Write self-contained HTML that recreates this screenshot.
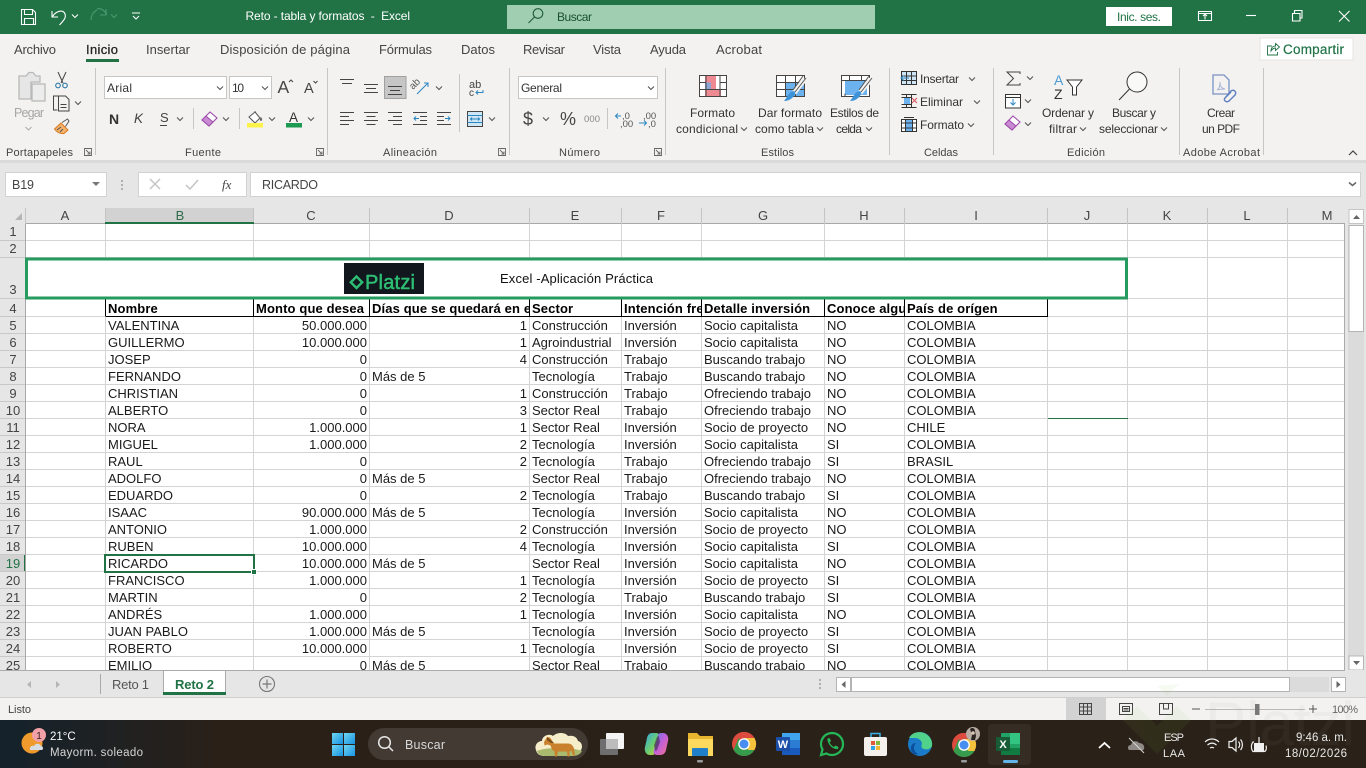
<!DOCTYPE html>
<html lang="es"><head><meta charset="utf-8"><title>Reto - tabla y formatos - Excel</title>
<style>
html,body{margin:0;padding:0;width:1366px;height:768px;overflow:hidden;background:#e6e6e6;font-family:"Liberation Sans",sans-serif}
#grid{position:absolute;left:25px;top:224px;width:1320px;height:446px;overflow:hidden;background:#fff}
table{border-collapse:separate;border-spacing:0;table-layout:fixed;width:1320px;font-size:13px;color:#1a1a1a}
td{border-right:1px solid #d4d4d4;border-bottom:1px solid #d4d4d4;line-height:14px;padding:2px 2px 0;vertical-align:top;overflow:hidden;white-space:nowrap;box-sizing:border-box;height:17px}
td.r{text-align:right;padding-right:2px}
tr.h td{height:18px;line-height:15px;font-weight:bold;color:#000;letter-spacing:.13px}
tr.h td.k{border-right:1px solid #000;border-bottom:1px solid #000}
tr.h td.a{border-right:1px solid #000}
tr.t td{height:41px}
svg#ui{position:absolute;left:0;top:0}
svg text{font-family:"Liberation Sans",sans-serif}
.l{font-size:12px;fill:#333}
.g{font-size:11px;fill:#444}
.tb{font-size:13px;fill:#444}
.ch{font-size:13px;fill:#444;text-anchor:middle}
.rh{font-size:13px;fill:#444;text-anchor:middle}
</style></head><body>
<div id="grid"><table>
<colgroup><col style="width:81px"><col style="width:148px"><col style="width:116px"><col style="width:160px"><col style="width:92px"><col style="width:80px"><col style="width:123px"><col style="width:80px"><col style="width:143px"><col style="width:80px"><col style="width:80px"><col style="width:80px"><col style="width:57px"></colgroup>
<tr><td></td><td></td><td></td><td></td><td></td><td></td><td></td><td></td><td></td><td></td><td></td><td></td><td></td></tr>
<tr><td></td><td></td><td></td><td></td><td></td><td></td><td></td><td></td><td></td><td></td><td></td><td></td><td></td></tr>
<tr class="t"><td colspan="9" style="border:0"></td><td colspan="1" style="border-right:1px solid #d4d4d4"></td><td></td><td></td><td></td></tr>
<tr class="h"><td class="a"></td><td class="k">Nombre</td><td class="k">Monto que desea</td><td class="k">Días que se quedará en el país</td><td class="k">Sector</td><td class="k">Intención frente</td><td class="k">Detalle inversión</td><td class="k">Conoce alguien</td><td class="k">País de orígen</td><td></td><td></td><td></td><td></td></tr>
<tr><td></td><td>VALENTINA</td><td class="r">50.000.000</td><td class="r">1</td><td>Construcción</td><td>Inversión</td><td>Socio capitalista</td><td>NO</td><td>COLOMBIA</td><td></td><td></td><td></td><td></td></tr>
<tr><td></td><td>GUILLERMO</td><td class="r">10.000.000</td><td class="r">1</td><td>Agroindustrial</td><td>Inversión</td><td>Socio capitalista</td><td>NO</td><td>COLOMBIA</td><td></td><td></td><td></td><td></td></tr>
<tr><td></td><td>JOSEP</td><td class="r">0</td><td class="r">4</td><td>Construcción</td><td>Trabajo</td><td>Buscando trabajo</td><td>NO</td><td>COLOMBIA</td><td></td><td></td><td></td><td></td></tr>
<tr><td></td><td>FERNANDO</td><td class="r">0</td><td>Más de 5</td><td>Tecnología</td><td>Trabajo</td><td>Buscando trabajo</td><td>NO</td><td>COLOMBIA</td><td></td><td></td><td></td><td></td></tr>
<tr><td></td><td>CHRISTIAN</td><td class="r">0</td><td class="r">1</td><td>Construcción</td><td>Trabajo</td><td>Ofreciendo trabajo</td><td>NO</td><td>COLOMBIA</td><td></td><td></td><td></td><td></td></tr>
<tr><td></td><td>ALBERTO</td><td class="r">0</td><td class="r">3</td><td>Sector Real</td><td>Trabajo</td><td>Ofreciendo trabajo</td><td>NO</td><td>COLOMBIA</td><td></td><td></td><td></td><td></td></tr>
<tr><td></td><td>NORA</td><td class="r">1.000.000</td><td class="r">1</td><td>Sector Real</td><td>Inversión</td><td>Socio de proyecto</td><td>NO</td><td>CHILE</td><td></td><td></td><td></td><td></td></tr>
<tr><td></td><td>MIGUEL</td><td class="r">1.000.000</td><td class="r">2</td><td>Tecnología</td><td>Inversión</td><td>Socio capitalista</td><td>SI</td><td>COLOMBIA</td><td></td><td></td><td></td><td></td></tr>
<tr><td></td><td>RAUL</td><td class="r">0</td><td class="r">2</td><td>Tecnología</td><td>Trabajo</td><td>Ofreciendo trabajo</td><td>SI</td><td>BRASIL</td><td></td><td></td><td></td><td></td></tr>
<tr><td></td><td>ADOLFO</td><td class="r">0</td><td>Más de 5</td><td>Sector Real</td><td>Trabajo</td><td>Ofreciendo trabajo</td><td>NO</td><td>COLOMBIA</td><td></td><td></td><td></td><td></td></tr>
<tr><td></td><td>EDUARDO</td><td class="r">0</td><td class="r">2</td><td>Tecnología</td><td>Trabajo</td><td>Buscando trabajo</td><td>SI</td><td>COLOMBIA</td><td></td><td></td><td></td><td></td></tr>
<tr><td></td><td>ISAAC</td><td class="r">90.000.000</td><td>Más de 5</td><td>Tecnología</td><td>Inversión</td><td>Socio capitalista</td><td>NO</td><td>COLOMBIA</td><td></td><td></td><td></td><td></td></tr>
<tr><td></td><td>ANTONIO</td><td class="r">1.000.000</td><td class="r">2</td><td>Construcción</td><td>Inversión</td><td>Socio de proyecto</td><td>NO</td><td>COLOMBIA</td><td></td><td></td><td></td><td></td></tr>
<tr><td></td><td>RUBEN</td><td class="r">10.000.000</td><td class="r">4</td><td>Tecnología</td><td>Inversión</td><td>Socio capitalista</td><td>SI</td><td>COLOMBIA</td><td></td><td></td><td></td><td></td></tr>
<tr><td></td><td>RICARDO</td><td class="r">10.000.000</td><td>Más de 5</td><td>Sector Real</td><td>Inversión</td><td>Socio capitalista</td><td>NO</td><td>COLOMBIA</td><td></td><td></td><td></td><td></td></tr>
<tr><td></td><td>FRANCISCO</td><td class="r">1.000.000</td><td class="r">1</td><td>Tecnología</td><td>Inversión</td><td>Socio de proyecto</td><td>SI</td><td>COLOMBIA</td><td></td><td></td><td></td><td></td></tr>
<tr><td></td><td>MARTIN</td><td class="r">0</td><td class="r">2</td><td>Tecnología</td><td>Trabajo</td><td>Buscando trabajo</td><td>SI</td><td>COLOMBIA</td><td></td><td></td><td></td><td></td></tr>
<tr><td></td><td>ANDRÉS</td><td class="r">1.000.000</td><td class="r">1</td><td>Tecnología</td><td>Inversión</td><td>Socio capitalista</td><td>NO</td><td>COLOMBIA</td><td></td><td></td><td></td><td></td></tr>
<tr><td></td><td>JUAN PABLO</td><td class="r">1.000.000</td><td>Más de 5</td><td>Tecnología</td><td>Inversión</td><td>Socio de proyecto</td><td>SI</td><td>COLOMBIA</td><td></td><td></td><td></td><td></td></tr>
<tr><td></td><td>ROBERTO</td><td class="r">10.000.000</td><td class="r">1</td><td>Tecnología</td><td>Inversión</td><td>Socio de proyecto</td><td>SI</td><td>COLOMBIA</td><td></td><td></td><td></td><td></td></tr>
<tr><td></td><td>EMILIO</td><td class="r">0</td><td>Más de 5</td><td>Sector Real</td><td>Trabajo</td><td>Buscando trabajo</td><td>NO</td><td>COLOMBIA</td><td></td><td></td><td></td><td></td></tr>
</table></div>

<svg id="ui" width="1366" height="768" viewBox="0 0 1366 768" xmlns="http://www.w3.org/2000/svg">
<defs>
<path id="c" d="M-3 -1.5L0 1.5L3 -1.5" fill="none" stroke="#555" stroke-width="1.1"/>
<linearGradient id="tk" x1="0" x2="1" y1="0" y2="0"><stop offset="0" stop-color="#14222c"/><stop offset=".16" stop-color="#2a2018"/><stop offset="1" stop-color="#2a2218"/></linearGradient>
<linearGradient id="blu" x1="0" x2="1" y1="0" y2="1"><stop offset="0" stop-color="#6fd6f2"/><stop offset="1" stop-color="#1790e0"/></linearGradient>
<linearGradient id="copl" x1="0" x2="1" y1="0" y2="1"><stop offset="0" stop-color="#2fa8e8"/><stop offset=".55" stop-color="#6fcf6a"/><stop offset="1" stop-color="#f4c23c"/></linearGradient>
<linearGradient id="copr" x1="0" x2="1" y1="0" y2="1"><stop offset="0" stop-color="#5a7be8"/><stop offset=".5" stop-color="#c45fd8"/><stop offset="1" stop-color="#f2738a"/></linearGradient>
</defs>

<!-- title bar -->
<rect width="1366" height="34" fill="#217346"/>
<g fill="none" stroke="#fff" stroke-width="1.1">
<path d="M21.5 9.5h11l3 3v12h-14zM24.5 9.5v5h8v-5M24.5 24.5v-6h9v6"/>
<path d="M52 11v6h6M52.5 16.5C56 11 63 9 65 14c1.5 4-2 7-5.5 11"/>
</g>
<path d="M72 14.5l3 3 3-3" fill="none" stroke="#fff"/>
<path d="M97 9a7 7 0 0 1 7 2l3 3M106 9v6h-6M91 20c0-4 2-8 6-10" fill="none" stroke="#4c9a72" stroke-width="1.1"/>
<path d="M111 14.5l3 3 3-3" fill="none" stroke="#4c9a72"/>
<path d="M132 13h8M133 16l3 3 3-3" fill="none" stroke="#fff" stroke-width="1.1"/>
<text x="245.5" y="20" font-size="12" fill="#fff" textLength="164.5" xml:space="preserve">Reto - tabla y formatos  -  Excel</text>
<rect x="507" y="5" width="368" height="24" fill="#9fceb0"/>
<circle cx="538" cy="13.5" r="4.8" fill="none" stroke="#1e5a3a" stroke-width="1.1"/><path d="M534.5 17l-6 6" stroke="#1e5a3a" stroke-width="1.1"/>
<text x="557" y="21" font-size="12" fill="#1b4f33" textLength="35">Buscar</text>
<rect x="1106" y="7" width="66" height="19" fill="#fff"/>
<text x="1117" y="21" font-size="12" fill="#217346" textLength="44">Inic. ses.</text>
<g fill="none" stroke="#fff" stroke-width="1.1">
<path d="M1198.5 11.5h13v9h-13zM1198.5 13.5h13M1205 19.5v-5M1203 16l2-2 2 2"/>
<path d="M1246 15.5h10"/>
<path d="M1292.5 13.5h7.5v7.5h-7.5zM1294.5 13v-2.500h7.5v7.5h-2"/>
<path d="M1339 11l10.5 10.5M1349.5 11L1339 21.5"/>
</g>

<!-- ribbon -->
<rect y="34" width="1366" height="126" fill="#f3f2f1"/>
<rect y="160" width="1366" height="48" fill="#e6e6e6"/>
<rect y="160" width="1366" height="3" fill="#dadada"/>
<text class="tb" x="14" y="54" textLength="42">Archivo</text>
<text class="tb" x="86" y="54" textLength="32" style="fill:#222;stroke:#222;stroke-width:.25">Inicio</text>
<text class="tb" x="146" y="54" textLength="44">Insertar</text>
<text class="tb" x="220" y="54" textLength="130">Disposición de página</text>
<text class="tb" x="379" y="54" textLength="53">Fórmulas</text>
<text class="tb" x="461" y="54" textLength="34">Datos</text>
<text class="tb" x="523" y="54" textLength="42">Revisar</text>
<text class="tb" x="593" y="54" textLength="28">Vista</text>
<text class="tb" x="650" y="54" textLength="36">Ayuda</text>
<text class="tb" x="716" y="54" textLength="46">Acrobat</text>
<rect x="86" y="59" width="33" height="3" fill="#217346"/>
<rect x="1260" y="38" width="93" height="22" fill="#fff" stroke="#e4e4e4"/>
<path d="M1272 46h-4.5v9h10v-3M1271 51c0-3.500 2-5 4.500-5v-2.500l4 3.500-4 3.500v-2.500c-1.500 0-3 .5-4.500 3z" fill="none" stroke="#217346" stroke-width=".9"/>
<text x="1283" y="54" font-size="13.5" fill="#217346" textLength="61" style="stroke:#217346;stroke-width:.2">Compartir</text>

<!-- ribbon separators -->
<g stroke="#c8c6c4"><path d="M95.5 68v87M327.500 68v87M509.5 68v87M665.5 68v87M889.5 68v87M993.5 68v87M1179.5 68v87M1263.5 68v87"/><path d="M193.5 108v21M239.5 108v21M459.5 74v58M607.5 108v21"/></g>

<!-- group labels -->
<text class="g" x="6" y="156" textLength="67">Portapapeles</text>
<text class="g" x="185" y="156" textLength="36">Fuente</text>
<text class="g" x="383" y="156" textLength="54">Alineación</text>
<text class="g" x="559" y="156" textLength="41">Número</text>
<text class="g" x="761" y="156" textLength="33">Estilos</text>
<text class="g" x="924" y="156" textLength="34">Celdas</text>
<text class="g" x="1067" y="156" textLength="38">Edición</text>
<text class="g" x="1183" y="156" textLength="77">Adobe Acrobat</text>
<g fill="none" stroke="#666" stroke-width=".9">
<path d="M84.5 148.5h7v7h-7zM86 150l4 4M90 151.5v2.5h-2.5"/>
<path d="M316.5 148.5h7v7h-7zM318 150l4 4M322 151.5v2.5h-2.5"/>
<path d="M498.5 148.5h7v7h-7zM500 150l4 4M504 151.5v2.5h-2.5"/>
<path d="M654.5 148.5h7v7h-7zM656 150l4 4M660 151.5v2.5h-2.5"/>
</g>
<path d="M1349 155l4-4 4 4" fill="none" stroke="#444" stroke-width="1.2"/>

<!-- clipboard -->
<g fill="none" stroke="#b9b9b9" stroke-width="1.3">
<path d="M19 76h7l3-3.500h4l3 3.500h4v6h-9v17h-12z" fill="#e6e6e6"/>
<rect x="32" y="84" width="13" height="17" fill="#ececec"/>
</g>
<text x="14" y="117" font-size="12.5" fill="#a6a6a6" textLength="30">Pegar</text>
<path d="M25.5 127l3 3 3-3" fill="none" stroke="#aaa"/>
<path d="M58 72l5 11M66 72l-5 11" fill="none" stroke="#444"/>
<circle cx="58" cy="85.5" r="2.3" fill="none" stroke="#2b79a8" stroke-width="1.1"/><circle cx="65" cy="85.5" r="2.3" fill="none" stroke="#2b79a8" stroke-width="1.1"/>
<path d="M58 96h-4.500v14h4M58.5 101v-5h7l3.500 3.500v11.500h-10.500zM60.5 104.500h6M60.5 107.5h6" fill="none" stroke="#444"/>
<use href="#c" x="78" y="103"/>
<path d="M54.5 129l6.500-6 7 7-4 3.500c-4 .5-7-1-9.500-4.500z" fill="#f4b26a" stroke="#d67a24"/><path d="M62 122.5l5.500-3.500 1.500 2-3.500 5.500M57 130l4-3M60 132l3-3" fill="none" stroke="#555"/>

<!-- font -->
<rect x="104.5" y="76.5" width="122" height="22" fill="#fff" stroke="#c8c6c4"/>
<text class="l" x="107" y="92" textLength="25">Arial</text><use href="#c" x="220" y="88"/>
<rect x="229.5" y="76.5" width="42" height="22" fill="#fff" stroke="#c8c6c4"/>
<text class="l" x="232" y="92" textLength="12">10</text><use href="#c" x="265" y="88"/>
<text x="277.5" y="93" font-size="17.5" fill="#444">A</text><path d="M289 82l2-2 2 2" fill="none" stroke="#444"/>
<text x="304" y="93" font-size="14.500" fill="#444">A</text><path d="M313.5 81l2 2 2-2" fill="none" stroke="#444"/>
<text x="109" y="124" font-size="14" font-weight="bold" fill="#333">N</text>
<text x="134" y="123" font-size="13.5" font-style="italic" fill="#444">K</text>
<text x="160" y="122" font-size="13" fill="#444">S</text><path d="M160 125.500h7" stroke="#444"/>
<use href="#c" x="180" y="119"/>
<path d="M202 120l8-8 7 6-8 8z" fill="#fff" stroke="#9c4aa8" stroke-width="1.1"/><path d="M202 120l4-4 7 6-4 4z" fill="#c98ad4" stroke="#9c4aa8"/>
<use href="#c" x="226" y="119"/>
<path d="M249 117l6-5 5 6-5 5zM255 112v-1" fill="#fff" stroke="#555"/><path d="M261 117c1.5 2 1.5 3.500 0 4-1.5-.5-1.5-2 0-4z" fill="#666"/>
<rect x="247" y="123" width="16" height="4.5" fill="#fdf24a"/>
<use href="#c" x="272" y="119"/>
<text x="289" y="122" font-size="13.5" fill="#333">A</text>
<rect x="286" y="123" width="16" height="4.5" fill="#1d9a52"/>
<use href="#c" x="311" y="119"/>

<!-- alignment -->
<rect x="384.5" y="76.5" width="21.5" height="22" fill="#c6c6c6" stroke="#a0a0a0"/>
<g stroke="#444" fill="none">
<path d="M340 79.5h14M342 83.5h10"/>
<path d="M364 84.5h14M366 88.500h10M364 92.5h14"/>
<path d="M388 86.5h14M390 90.5h10M388 94.5h14"/>
<path d="M340 112.5h14M340 116.5h9M340 120.5h14M340 124.5h9"/>
<path d="M364 112.5h14M366.5 116.5h9M364 120.5h14M366.5 124.5h9"/>
<path d="M388 112.5h14M393 116.5h9M388 120.5h14M393 124.5h9"/>
<path d="M413 112.5h14M420 116.5h7M420 120.5h7M413 124.5h14"/>
<path d="M437 112.5h14M437 116.5h7M437 120.5h7M437 124.5h14"/>
</g>
<path d="M419 118.5h-5M416 116.5l-2 2 2 2" stroke="#2b85c0" fill="none"/>
<path d="M445 118.5h5M448 116.500l2 2-2 2" stroke="#2b85c0" fill="none"/>
<text x="413" y="90" font-size="10" fill="#555" transform="rotate(-45 413 90)">ab</text>
<path d="M417 94l11-11M424 83h4v4" stroke="#2b85c0" fill="none"/>
<use href="#c" x="439" y="88"/>
<text x="469" y="88" font-size="11" fill="#444">ab</text><text x="469" y="96" font-size="10" fill="#444">c</text>
<path d="M483 90v2.500h-7M478 90.500l-2 2 2 2" stroke="#2b85c0" fill="none"/>
<rect x="467.5" y="111.5" width="15" height="15" fill="#cfe7f5" stroke="#444"/><path d="M467.5 115.500h15M467.5 122.500h15M471 119h8M472 117.500l-1.500 1.500 1.500 1.500M478 117.500l1.500 1.500-1.500 1.500" stroke="#2b85c0" fill="none"/>
<use href="#c" x="492" y="119"/>

<!-- number -->
<rect x="518.5" y="76.5" width="139" height="22" fill="#fff" stroke="#c8c6c4"/>
<text class="l" x="521" y="92" textLength="41">General</text><use href="#c" x="651" y="88"/>
<text x="523" y="125" font-size="18" fill="#444" textLength="10">$</text><use href="#c" x="546" y="119"/>
<text x="560" y="125" font-size="18" fill="#444" textLength="16">%</text>
<text x="584" y="122" font-size="9.5" fill="#888" textLength="16">000</text>
<text x="622" y="119" font-size="9.5" fill="#555">,0</text><text x="620" y="127" font-size="9.5" fill="#555">,00</text>
<path d="M621 116h-6M618 113.500l-2.500 2.500 2.500 2.500" stroke="#2b85c0" fill="none"/>
<text x="643" y="119" font-size="9.5" fill="#555">,00</text><text x="648" y="127" font-size="9.5" fill="#555">,0</text>
<path d="M639 123h7M644 120.500l2.500 2.500-2.500 2.500" stroke="#2b85c0" fill="none"/>

<!-- styles -->
<rect x="699.5" y="75.5" width="27" height="21" fill="#fff" stroke="#444"/>
<rect x="705" y="76" width="11" height="6.5" fill="#ee8b92"/><rect x="710" y="82" width="6" height="7" fill="#ee8b92"/><rect x="705" y="82.500" width="6" height="6.500" fill="#8ea6d4"/><rect x="705" y="89" width="16" height="7" fill="#ee8b92"/>
<path d="M699.5 82.500h6M720 82.500h7M699.5 89.500h27M706 75.500v21M720 75.500v21" stroke="#444" fill="none"/>
<rect x="776.5" y="75.5" width="28" height="21" fill="#fff" stroke="#444"/>
<rect x="785" y="82" width="19" height="14" fill="#6cb2ee"/>
<path d="M776.500 82.500h28M776.500 89.500h28M785.500 75.500v21M795.500 75.500v21" stroke="#444" fill="none"/>
<path d="M805 79l-11 14" stroke="#f3f2f1" stroke-width="5"/><path d="M806 78l-11 14M803 76l-10 14" stroke="#555" fill="none"/>
<path d="M791 92c3-2 5 0 4 2-1 3-5 7-11 7 3-3 3-6 7-9z" fill="#3c93d8"/>
<rect x="841.5" y="75.5" width="28" height="21" fill="#fff" stroke="#444"/>
<rect x="845" y="80" width="22" height="15" fill="#6cb2ee"/>
<path d="M841.5 80.5h28M849.5 75.5v5M861.5 75.5v5M845 96.5v-3" stroke="#444" fill="none"/>
<path d="M871 79l-11 14" stroke="#f3f2f1" stroke-width="5"/><path d="M872 78l-11 14M869 76l-10 14" stroke="#555" fill="none"/>
<path d="M857 92c3-2 5 0 4 2-1 3-5 7-11 7 3-3 3-6 7-9z" fill="#3c93d8"/>
<text class="l" x="690" y="117" textLength="45">Formato</text>
<text class="l" x="676" y="133" textLength="62">condicional</text><use href="#c" x="744" y="129"/>
<text class="l" x="758" y="117" textLength="64">Dar formato</text>
<text class="l" x="755" y="133" textLength="59">como tabla</text><use href="#c" x="820" y="129"/>
<text class="l" x="830" y="117" textLength="49">Estilos de</text>
<text class="l" x="836" y="133" textLength="26">celda</text><use href="#c" x="869" y="129"/>

<!-- cells -->
<rect x="901.5" y="71.5" width="15" height="13" fill="#cfe5f5" stroke="#333"/><path d="M901.5 76h15M901.500 80.500h15M906.500 71.500v13M911.500 71.500v13" stroke="#333" fill="none"/><path d="M901 78h8M904 75.500l-3 2.500 3 2.500" stroke="#2b85c0" fill="#f3f2f1"/>
<text class="l" x="920" y="83" textLength="39">Insertar</text><use href="#c" x="972" y="79"/>
<path d="M901.5 94.500h15M901.500 107.500h15M906.500 94.500v3M911.500 94.500v3M906.500 104.500v3M911.500 104.500v3M901.500 97.500h10v7h-10" stroke="#333" fill="none"/><rect x="904" y="98" width="6" height="6" fill="#6cb2ee"/><path d="M912 98l5 5M917 98l-5 5" stroke="#d8505a"/>
<text class="l" x="920" y="106" textLength="43">Eliminar</text><use href="#c" x="977" y="102"/>
<rect x="901.5" y="119.5" width="15" height="12" fill="#fff" stroke="#333"/><rect x="905" y="120" width="8" height="11" fill="#6cb2ee"/><path d="M901.500 123h15M901.500 128h15M905.500 119.500v12M912.500 119.500v12M904 117.500h10" stroke="#333" fill="none"/>
<text class="l" x="920" y="129" textLength="44">Formato</text><use href="#c" x="971" y="125"/>

<!-- editing -->
<path d="M1020 74v-2h-13l6.500 6.500-6.500 6.500h13v-2" fill="none" stroke="#444"/><use href="#c" x="1030" y="78"/>
<rect x="1005.5" y="94.5" width="15" height="13.5" fill="#fff" stroke="#333"/><path d="M1005.500 97.500h15" stroke="#333"/><path d="M1013 99v6M1010.500 102.500l2.500 2.500 2.500-2.500" stroke="#2b85c0" fill="none"/><use href="#c" x="1028" y="101"/>
<path d="M1005 124l8-8 7 6-8 8z" fill="#fff" stroke="#9c4aa8" stroke-width="1.1"/><path d="M1005 124l4-4 7 6-4 4z" fill="#c98ad4" stroke="#9c4aa8"/><use href="#c" x="1028" y="124"/>
<text x="1054" y="85" font-size="14" fill="#4b9bd4">A</text><text x="1054" y="99" font-size="14" fill="#333">Z</text>
<path d="M1067 80h15l-5.500 7v8h-4v-8z" fill="#fff" stroke="#333"/>
<text class="l" x="1042" y="117" textLength="52">Ordenar y</text>
<text class="l" x="1049" y="133" textLength="28">filtrar</text><use href="#c" x="1083" y="129"/>
<circle cx="1137" cy="82" r="10" fill="#fff" fill-opacity=".5" stroke="#333"/><path d="M1129.5 89l-10.500 11" stroke="#333"/>
<text class="l" x="1112" y="117" textLength="44">Buscar y</text>
<text class="l" x="1099" y="133" textLength="59">seleccionar</text><use href="#c" x="1164" y="129"/>
<path d="M1213 75h11l5 5v14h-16z" fill="none" stroke="#7b92c4" stroke-width="1.3"/><path d="M1217 90c2-1 3-4 3-8 0 4 1 6 5 7-3 0-6 0-8 1z" fill="none" stroke="#a8b6d6"/>
<path d="M1225 98l6-7c3-2 6 1 4 4l-6 6c-3 2-6-1-4-3zM1226 97l5-5" fill="#f3f2f1" stroke="#5f7fc0" stroke-width="1.4"/>
<text class="l" x="1207" y="117" textLength="28">Crear</text>
<text class="l" x="1202" y="133" textLength="38">un PDF</text>

<!-- formula bar -->
<rect x="5.5" y="172.5" width="101" height="24" fill="#fff" stroke="#d2d2d2"/>
<text x="12" y="189" font-size="12.5" fill="#444" textLength="22">B19</text><path d="M92 182h8l-4 4z" fill="#777"/>
<g fill="#b0b0b0"><rect x="121" y="180" width="2" height="2"/><rect x="121" y="184" width="2" height="2"/><rect x="121" y="188" width="2" height="2"/></g>
<rect x="138.5" y="172.5" width="108" height="24" fill="#fff" stroke="#d2d2d2"/>
<path d="M150 179l10 10M160 179l-10 10" stroke="#c4c4c4" stroke-width="1.5"/>
<path d="M186 185l4 4 8-9" fill="none" stroke="#c4c4c4" stroke-width="1.5"/>
<text x="222" y="189" font-size="13" font-style="italic" fill="#444" style="font-family:'Liberation Serif',serif">fx</text>
<rect x="250.5" y="172.5" width="1110" height="24" fill="#fff" stroke="#d2d2d2"/>
<text x="262" y="189" font-size="12.5" fill="#444" textLength="56">RICARDO</text>
<path d="M1349 182.500l3.500 3 3.500-3" fill="none" stroke="#666" stroke-width="1.5"/>

<!-- col headers -->
<rect x="0" y="208" width="1345" height="16" fill="#e6e6e6"/>
<rect x="106" y="208" width="148" height="16" fill="#d2d2d2"/>
<rect x="25" y="223" width="1320" height="1" fill="#a8a8a8"/>
<rect x="105" y="222" width="149" height="2" fill="#217346"/>
<path d="M15 220h7v-7z" fill="#b5b5b5"/>
<g stroke="#c4c4c4"><path d="M25.5 208v16M105.500 208v14M253.500 208v14M369.500 208v16M529.500 208v16M621.500 208v16M701.500 208v16M824.500 208v16M904.500 208v16M1047.500 208v16M1127.500 208v16M1207.500 208v16M1287.500 208v16"/></g>
<text class="ch" x="65" y="220">A</text><text class="ch" x="180" y="220" style="fill:#2f6b4b">B</text><text class="ch" x="311" y="220">C</text><text class="ch" x="449" y="220">D</text><text class="ch" x="575" y="220">E</text><text class="ch" x="661" y="220">F</text><text class="ch" x="763" y="220">G</text><text class="ch" x="864" y="220">H</text><text class="ch" x="976" y="220">I</text><text class="ch" x="1087" y="220">J</text><text class="ch" x="1167" y="220">K</text><text class="ch" x="1247" y="220">L</text><text class="ch" x="1327" y="220">M</text>

<!-- row headers -->
<rect x="0" y="224" width="25" height="446" fill="#e6e6e6"/>
<rect x="0" y="555" width="25" height="17" fill="#d2d2d2"/>
<rect x="24" y="554" width="2" height="18" fill="#217346"/>
<g stroke="#c8c8c8"><path d="M0 240.500h25M0 257.500h25M0 298.500h25M0 316.500h25M0 333.500h25M0 350.500h25M0 367.500h25M0 384.500h25M0 401.500h25M0 418.500h25M0 435.500h25M0 452.500h25M0 469.500h25M0 486.500h25M0 503.500h25M0 520.500h25M0 537.500h25M0 554.500h25M0 571.500h25M0 588.500h25M0 605.500h25M0 622.500h25M0 639.500h25M0 656.500h25"/></g>
<path d="M25.500 224v446" stroke="#a8a8a8"/>
<text class="rh" x="13" y="236">1</text><text class="rh" x="13" y="253">2</text><text class="rh" x="13" y="294">3</text><text class="rh" x="13" y="313">4</text><text class="rh" x="13" y="330">5</text><text class="rh" x="13" y="347">6</text><text class="rh" x="13" y="364">7</text><text class="rh" x="13" y="381">8</text><text class="rh" x="13" y="398">9</text><text class="rh" x="13" y="415">10</text><text class="rh" x="13" y="432">11</text><text class="rh" x="13" y="449">12</text><text class="rh" x="13" y="466">13</text><text class="rh" x="13" y="483">14</text><text class="rh" x="13" y="500">15</text><text class="rh" x="13" y="517">16</text><text class="rh" x="13" y="534">17</text><text class="rh" x="13" y="551">18</text><text class="rh" x="13" y="568" style="fill:#217346">19</text><text class="rh" x="13" y="585">20</text><text class="rh" x="13" y="602">21</text><text class="rh" x="13" y="619">22</text><text class="rh" x="13" y="636">23</text><text class="rh" x="13" y="653">24</text>
<clipPath id="rc"><rect x="0" y="657" width="25" height="13"/></clipPath>
<text class="rh" x="13" y="670" clip-path="url(#rc)">25</text>

<!-- row 3 merged box + logo -->
<rect x="26.500" y="259" width="1100" height="39" fill="none" stroke="#269a5f" stroke-width="3"/>
<rect x="344" y="263" width="80" height="31" fill="#12161d"/>
<path d="M354 285.500L350.800 282.300L356.500 276.500L362.200 282.300L356.500 288L354 285.500" fill="none" stroke="#2dbd73" stroke-width="2.400"/>
<text x="365" y="289" font-size="20" fill="#2dbd73" textLength="50" style="stroke:#2dbd73;stroke-width:.5">Platzi</text>
<text x="500" y="283" font-size="13" fill="#111" textLength="153">Excel -Aplicación Práctica</text>
<rect x="1048" y="418" width="80" height="1" fill="#217346"/>
<!-- selected cell -->
<rect x="105" y="555" width="149" height="17" fill="none" stroke="#217346" stroke-width="2"/>
<rect x="251.5" y="569.5" width="5" height="5" fill="#217346" stroke="#fff"/>
<path d="M1344.5 224v446" stroke="#ababab"/>

<!-- v scrollbar -->
<rect x="1345" y="208" width="21" height="463" fill="#e6e6e6"/>
<rect x="1348" y="225" width="16" height="445" fill="#dbdbdb"/>
<rect x="1349" y="209.5" width="14.5" height="14" fill="#fff" stroke="#c4c4c4"/><path d="M1353 219h7l-3.500-4z" fill="#666"/>
<rect x="1349" y="225.5" width="14.5" height="106" fill="#fff" stroke="#b4b4b4"/>
<rect x="1349" y="656" width="14.5" height="14" fill="#fff" stroke="#b4b4b4"/><path d="M1353 661h7l-3.500 4z" fill="#666"/>

<!-- sheet tabs -->
<rect x="0" y="670" width="1366" height="28" fill="#e6e6e6"/>
<path d="M0 670.500h1345" stroke="#ababab"/>
<path d="M0 697.500h1366" stroke="#cfcfcf"/>
<path d="M31 681l-4 3.500 4 3.500zM56 681l4 3.500-4 3.500z" fill="#b5b5b5"/>
<path d="M100.500 674v20" stroke="#a8a8a8"/>
<text x="112" y="689" font-size="13" fill="#555" textLength="37">Reto 1</text>
<path d="M163.500 694v-23.500h62v23.500" fill="#fff" stroke="#ababab"/>
<rect x="163" y="692" width="63" height="3" fill="#217346"/>
<text x="175" y="689" font-size="13" font-weight="bold" fill="#217346" textLength="39">Reto 2</text>
<circle cx="267" cy="684" r="7.5" fill="none" stroke="#777" stroke-width="1.1"/><path d="M262.5 684h9M267 679.500v9" stroke="#777" stroke-width="1.2"/>
<g fill="#b0b0b0"><rect x="819" y="679" width="2" height="2"/><rect x="819" y="683" width="2" height="2"/><rect x="819" y="687" width="2" height="2"/></g>
<rect x="836.5" y="677.5" width="14" height="14" fill="#fff" stroke="#b4b4b4"/><path d="M845.5 681l-4 3.500 4 3.500z" fill="#666"/>
<rect x="851" y="677" width="478" height="15" fill="#dbdbdb"/>
<rect x="851.5" y="677.5" width="438" height="14" fill="#fff" stroke="#b4b4b4"/>
<rect x="1331.5" y="677.5" width="14" height="14" fill="#fff" stroke="#b4b4b4"/><path d="M1336.5 681l4 3.500-4 3.500z" fill="#666"/>

<!-- status bar -->
<rect x="0" y="698" width="1366" height="23" fill="#f3f2f1"/>
<text x="8" y="713" font-size="11" fill="#444" textLength="23">Listo</text>
<rect x="1066" y="698" width="40" height="22" fill="#d2d2d2"/>
<g fill="none" stroke="#444"><path d="M1079.5 703.5h12v11h-12zM1079.5 707h12M1079.5 711h12M1083.5 703.5v11M1087.5 703.5v11"/>
<path d="M1119.5 703.5h13v11h-13zM1122.5 706.5h7v5h-7zM1123.5 708.5h5M1123.5 710h5"/>
<path d="M1159.5 703.5h13v11h-13zM1163.5 703.5v5.500h5v-5.500"/></g>
<path d="M1192 709h8M1309 709h8M1313 705v8" stroke="#555" fill="none"/>
<path d="M1205 709.500h100" stroke="#b8b8b8"/>
<rect x="1255" y="704" width="4.5" height="11" fill="#777"/>
<text x="1332" y="713" font-size="11" fill="#666" textLength="26">100%</text>

<!-- taskbar -->
<rect x="0" y="720" width="1366" height="48" fill="url(#tk)"/>
<!-- watermark -->
<g opacity=".07">
<path d="M1157 686l-34 34 34 34 34-34-14-14-20 20-20-20 20-20 10 10 12-12z" fill="#8bc34a"/>
<text x="1205" y="745" font-size="62" fill="#999" textLength="150">Platzi</text>
</g>

<circle cx="32" cy="743" r="10.5" fill="#ee9a2c"/>
<path d="M30 750c-1-3 2-5 4-4 1-3 6-3 7 0 2 0 3 3 1 4z" fill="#d7dce2"/>
<circle cx="39" cy="735" r="7" fill="#f2a0a8"/><text x="39" y="739" font-size="10" fill="#3a1f1f" text-anchor="middle">1</text>
<text x="50" y="740" font-size="11.5" fill="#fff">21°C</text>
<text x="50" y="756" font-size="11.5" fill="#d5d5d5" textLength="93">Mayorm. soleado</text>
<g fill="url(#blu)"><rect x="332" y="733" width="11" height="11"/><rect x="344" y="733" width="11" height="11"/><rect x="332" y="745" width="11" height="11"/><rect x="344" y="745" width="11" height="11"/></g>
<rect x="368" y="728" width="220" height="32" rx="16" fill="#423a33"/>
<circle cx="384.5" cy="742.5" r="5.8" fill="none" stroke="#e8e8e8" stroke-width="1.5"/><path d="M389 747l4 4" stroke="#e8e8e8" stroke-width="1.5"/>
<text x="405" y="749" font-size="12.5" fill="#d8d8d8" textLength="40">Buscar</text>
<!-- horse picture -->
<path d="M536 750c-2-5 2-9 6-9 0-5 7-8 11-5 4-4 12-4 15 0 5-1 9 1 10 5 4 1 5 6 3 9-2 5-6 6-10 6h-26c-4 0-8-1-9-6z" fill="#f6eecb"/>
<path d="M537 751c8-4 36-4 45 0-2 4-6 5-10 5h-26c-4 0-8-1-9-5z" fill="#a9b96d"/>
<path d="M544 742l3-5 3 .5 2 3 2 3h14c3 0 5 2 6 5l1 7h-2l-1.500-5-2 1v5h-2l-.5-5h-9l-1 5h-2l-.5-5-2.500-2-1.500-4-3-1-3 1z" fill="#c9812e"/>
<path d="M547 737l7 6h-3l-4-3z" fill="#7a4a18"/>

<rect x="606" y="733" width="18" height="16" rx="1" fill="#f4f4f4"/>
<rect x="600" y="739" width="18" height="16" rx="1" fill="#6e6e6e"/>
<rect x="606" y="739" width="12" height="10" fill="#bcbcbc"/>
<!-- copilot -->
<path d="M652 733h4c2 0 3 1 3.500 3l-4.500 17c-.5 1.500-1.500 2-3 2h-2c-4 0-6-4-5-8l2-9c.6-3 2.500-5 5-5z" fill="url(#copl)"/>
<path d="M660 755h-3c-2 0-3-1-3.500-3l4.500-17c.5-1.500 1.500-2 3-2h2c4 0 6 4 5 8l-2 9c-.6 3-2.500 5-6 5z" fill="url(#copr)"/>
<path d="M654 745l3-8c.5-1 2-1 2 0l1 5-3 8c-.5 1-2 1-2 0z" fill="#2a2030" opacity=".55"/>
<!-- folder -->
<path d="M688 733h9l3 3h13v20h-25z" fill="#e8b52f"/><path d="M688 739h25v17h-25z" fill="#fbd95e"/><rect x="692" y="748" width="16" height="8" rx="1" fill="#1f7fc8"/>
<rect x="697" y="760" width="6" height="2.5" rx="1" fill="#9a9a9a"/>
<!-- chrome -->
<circle cx="744" cy="744" r="12" fill="#dd4b3e"/><path d="M744 744l10.400 6a12 12 0 0 1-20.800 0l5-12z" fill="#369b4c"/><path d="M744 738h10.500a12 12 0 0 1-.1 12l-6 0-4.400-6z" fill="#f5c33b"/><path d="M733.600 738a12 12 0 0 1 20.900 0H744z" fill="#dd4b3e"/><circle cx="744" cy="744" r="5.800" fill="#fff"/><circle cx="744" cy="744" r="4.500" fill="#4a8df0"/>
<!-- word -->
<rect x="782" y="733" width="18" height="22" rx="1" fill="#2b7cd3"/><rect x="782" y="733" width="18" height="7" fill="#41a5ee"/><rect x="782" y="748" width="18" height="7" fill="#185abd"/>
<rect x="776" y="737" width="14" height="14" rx="1" fill="#1c4fa8"/><text x="783" y="748" font-size="11" font-weight="bold" fill="#fff" text-anchor="middle">W</text>
<!-- whatsapp -->
<path d="M832 733a11 11 0 0 1 0 22c-2 0-4-.5-5.500-1.500l-5.500 1.500 1.500-5.500a11 11 0 0 1 9.500-16.500z" fill="none" stroke="#25b858" stroke-width="2.200"/>
<path d="M827.500 738.500l2-.5 1.500 3-1.500 1.500c1 2 2.500 3.500 4.500 4.500l1.500-1.500 3 1.500-.5 2c-5 1-11-5-10.500-10.500z" fill="#25b858"/>
<!-- store -->
<path d="M871 737v-3.500h9v3.500" fill="none" stroke="#3ab1e8" stroke-width="1.5"/>
<rect x="864" y="737" width="23" height="19" rx="2" fill="#f4f0ec"/>
<rect x="871" y="741" width="4" height="4" fill="#e05a3a"/><rect x="876" y="741" width="4" height="4" fill="#7fba3a"/><rect x="871" y="746" width="4" height="4" fill="#2ea3e8"/><rect x="876" y="746" width="4" height="4" fill="#f2b632"/>
<!-- edge -->
<circle cx="920" cy="744" r="12" fill="#1a7bc8"/><path d="M909 738c3-6 10-7 15-5 5 2 9 7 8 13-1 3-5 4-8 3-3-1-3-3-2-5 0-3-3-6-7-6s-5 0-6 0z" fill="#50d28a"/><path d="M916 743c-3 3-3 8 2 11-3 2-6-1-7-4-1-3 1-7 5-7z" fill="#0c4f9c"/>
<!-- chrome profile -->
<circle cx="964" cy="745" r="12" fill="#dd4b3e"/><path d="M964 745l10.400 6a12 12 0 0 1-20.800 0l5-12z" fill="#369b4c"/><path d="M964 739h10.500a12 12 0 0 1-.1 12l-6 0-4.400-6z" fill="#f5c33b"/><path d="M953.600 739a12 12 0 0 1 20.900 0H964z" fill="#dd4b3e"/><circle cx="964" cy="745" r="5.800" fill="#fff"/><circle cx="964" cy="745" r="4.500" fill="#4a8df0"/>
<circle cx="973" cy="734" r="7" fill="#b8aca4"/><path d="M970 729c2-2 5-1 5 2l1 5-1 4h-4l1-5z" fill="#2b2320"/><circle cx="973" cy="733" r="1.800" fill="#e0c8b8"/>
<rect x="961" y="760" width="6" height="2.5" rx="1" fill="#9a9a9a"/>
<!-- excel -->
<rect x="988" y="724" width="43" height="41" rx="4" fill="#352d24"/>
<rect x="1001" y="733" width="19" height="22" rx="1" fill="#21a366"/><rect x="1010" y="733" width="10" height="11" fill="#33c481"/><rect x="1001" y="748" width="19" height="7" fill="#107c41"/>
<rect x="996" y="737" width="14" height="14" rx="1" fill="#185c37"/><text x="1003" y="748" font-size="11" font-weight="bold" fill="#fff" text-anchor="middle">X</text>
<rect x="1003" y="760" width="15" height="3" rx="1.5" fill="#62b5e8"/>

<path d="M1099 748l5.500-5 5.500 5" fill="none" stroke="#fff" stroke-width="1.8"/>
<path d="M1129 750c-2-2-1-5 2-5 1-4 6-5 8-2 3 0 6 2 5 6-1 2-2 1-3 1z" fill="#8f8a85"/><path d="M1129 738l15 15" stroke="#d8d8d8"/>
<text x="1164" y="741" font-size="11" fill="#e8e8e8" textLength="20">ESP</text>
<text x="1163" y="757" font-size="11" fill="#e8e8e8" textLength="22">LAA</text>
<g fill="none" stroke="#f0f0f0" stroke-width="1.2">
<path d="M1205 742c4-4 10-4 14 0M1207.500 745c3-2.500 6-2.500 9 0M1210 748c1.500-1 2.500-1 4 0"/>
<path d="M1229 741.500h3l4-3.500v13l-4-3.500h-3zM1238.500 741.500c1.500 2 1.500 4.500 0 6.500M1240.500 739.500c2.500 3 2.500 7.500 0 10.500"/>
<path d="M1254 742h-1a4 6 0 0 0 0 9.500h11c2 0 3-3 2-6"/><path d="M1259 737v9M1256.500 743.500l2.500 2.500 2.500-2.500"/>
</g>
<rect x="1254" y="743" width="10" height="8" fill="#f0f0f0"/>
<text x="1296" y="741" font-size="11.5" fill="#e8e8e8" textLength="51">9:46 a. m.</text>
<text x="1285" y="757" font-size="11.5" fill="#e8e8e8" textLength="62">18/02/2026</text>
</svg>
</body></html>
